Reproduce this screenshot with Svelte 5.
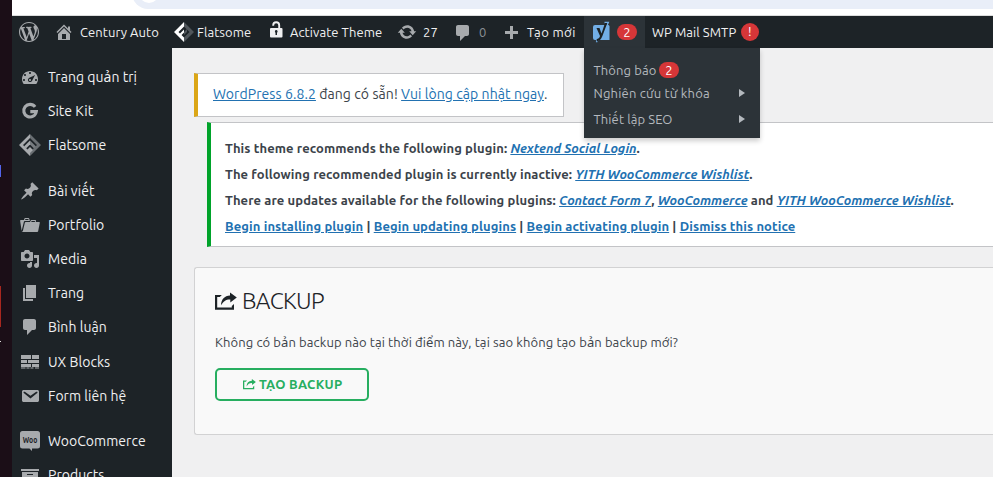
<script>
  const icons = {
    wordpress: 'M20 10c0-5.51-4.49-10-10-10C4.48 0 0 4.49 0 10c0 5.52 4.48 10 10 10 5.51 0 10-4.48 10-10zM7.78 15.37L4.37 6.22c.55-.02 1.17-.08 1.17-.08.5-.06.44-1.13-.06-1.11 0 0-1.45.11-2.37.11-.18 0-.37 0-.58-.01C4.12 2.69 6.87 1.11 10 1.11c2.33 0 4.45.87 6.05 2.34-.68-.11-1.65.39-1.65 1.58 0 .74.45 1.36.9 2.1.35.61.55 1.36.55 2.46 0 1.49-1.4 5-1.4 5l-3.03-8.37c.54-.02.82-.17.82-.17.5-.05.44-1.25-.06-1.22 0 0-1.44.12-2.38.12-.87 0-2.33-.12-2.33-.12-.5-.03-.56 1.2-.06 1.22l.92.08 1.26 3.41zM17.41 10c.24-.64.74-1.87.43-4.25.7 1.29 1.05 2.71 1.05 4.25 0 3.29-1.73 6.24-4.4 7.78.97-2.59 1.94-5.2 2.92-7.78zM6.1 18.09C3.12 16.65 1.11 13.53 1.11 10c0-1.3.23-2.48.72-3.59C3.25 10.3 4.67 14.2 6.1 18.09zm4.03-6.63l2.58 6.98c-.86.29-1.76.45-2.71.45-.79 0-1.57-.11-2.29-.33.81-2.38 1.62-4.74 2.42-7.1z',
    home: 'M16 8.5l1.53 1.53-1.06 1.06L10 4.6l-6.47 6.49-1.06-1.06L10 2.5l4 4v-2h2v4zm-6-2.46l6 5.99V18H4v-5.97zM12 17v-5H8v5h4z',
    update: 'M10.2 3.28c3.53 0 6.43 2.61 6.92 6h2.08l-3.5 4-3.5-4h2.32c-.45-1.97-2.21-3.45-4.32-3.45-1.45 0-2.73.71-3.54 1.78L4.95 5.66C6.23 4.2 8.11 3.28 10.2 3.28zm-.4 13.44c-3.52 0-6.43-2.61-6.92-6H.8l3.5-4c1.17 1.33 2.33 2.67 3.5 4H5.48c.45 1.97 2.21 3.45 4.32 3.45 1.45 0 2.73-.71 3.54-1.78l1.71 1.95c-1.28 1.46-3.15 2.38-5.25 2.38z',
    comment: 'M5 2h9c1.1 0 2 .9 2 2v7c0 1.1-.9 2-2 2h-2l-5 5v-5H5c-1.1 0-2-.9-2-2V4c0-1.1.9-2 2-2z',
    plus: 'M17 7v3h-5v5H9v-5H4V7h5V2h3v5h5z',
    dashboard: 'M3.76 17h12.48c1.1-1.37 1.76-3.11 1.76-5 0-4.42-3.58-8-8-8s-8 3.58-8 8c0 1.89.66 3.63 1.76 5zM9 6c0-.55.45-1 1-1s1 .45 1 1c0 .56-.45 1-1 1s-1-.44-1-1zM4 8c0-.55.45-1 1-1s1 .45 1 1c0 .56-.45 1-1 1s-1-.44-1-1zm4.52 3.4c.84-.83 6.51-3.5 6.51-3.5s-2.66 5.68-3.49 6.51c-.84.84-2.18.84-3.02 0-.83-.83-.83-2.18 0-3.01zM3 13c0-.55.45-1 1-1s1 .45 1 1c0 .56-.45 1-1 1s-1-.44-1-1zm6 0c0 .55.45 1 1 1s1-.45 1-1c0-.56-.45-1-1-1s-1 .44-1 1zm6 0c0-.55.45-1 1-1s1 .45 1 1c0 .56-.45 1-1 1s-1-.44-1-1z',
    pin: 'M10.44 3.02l1.82-1.82 6.36 6.35-1.83 1.82c-1.05-.68-2.48-.57-3.41.36l-.75.75c-.92.93-1.04 2.35-.35 3.41l-1.83 1.82-2.41-2.41-2.8 2.79c-.42.42-3.38 2.71-3.8 2.29s1.86-3.39 2.28-3.81l2.79-2.79L4.1 9.36l1.83-1.82c1.05.69 2.48.57 3.4-.36l.75-.75c.93-.92 1.05-2.35.36-3.41z',
    portfolio: 'M4 5H.78c-.37 0-.74.32-.69.84l1.56 9.99S3.5 8.47 3.86 6.7c.11-.53.61-.7.98-.7H10s-.7-2.08-.77-2.31C9.11 3.25 8.89 3 8.45 3H5.14c-.36 0-.7.23-.8.64C4.25 4.04 4 5 4 5zm4.88 0h-4s.42-1 .87-1h2.13c.48 0 1 1 1 1zM2.67 16.25c-.31.47-.76.75-1.26.75h15.73c.54 0 .92-.31 1.03-.83.44-2.19 1.68-8.44 1.68-8.44.07-.5-.3-.73-.62-.73H16V5.53c0-.16-.26-.53-.66-.53h-3.76c-.52 0-.87.58-.87.58L10 7H5.59c-.32 0-.63.19-.69.5 0 0-1.59 6.7-1.72 7.33-.07.37-.22.99-.51 1.42zM15.38 7H11s.58-1 1.13-1h2.29c.71 0 .96 1 .96 1z',
    media: 'M13 11V4c0-.55-.45-1-1-1h-1.67L9 1H5L3.67 3H2c-.55 0-1 .45-1 1v7c0 .55.45 1 1 1h10c.55 0 1-.45 1-1zM7 4.5c1.38 0 2.5 1.12 2.5 2.5S8.38 9.5 7 9.5 4.5 8.38 4.5 7 5.62 4.5 7 4.5zM14 6h5v10.5c0 1.38-1.12 2.5-2.5 2.5S14 17.88 14 16.5s1.12-2.5 2.5-2.5c.17 0 .34.02.5.05V9h-3V6zm-4 8.05V13h2v3.5c0 1.38-1.12 2.5-2.5 2.5S7 17.88 7 16.5 8.12 14 9.5 14c.17 0 .34.02.5.05z',
    page: 'M6 15V2h10v13H6zm-1 1h8v2H3V5h2v11z',
    blocks: 'M1 3h10v4H1zM12 3h7v4h-7zM1 8h6v3H1zM8 8h11v3H8zM1 12h10v3H1zM12 12h7v3h-7zM1 15.600h4.500v1H1zM6.500 15.600h3v1h-3zM10.500 15.600h3v1h-3zM15 15.600h4v1h-4z',
    email: 'M3.87 4h13.25C18.37 4 19 4.59 19 5.79v8.42c0 1.19-.63 1.79-1.88 1.79H3.87c-1.25 0-1.88-.6-1.88-1.79V5.79c0-1.2.63-1.79 1.88-1.79zm6.62 8.6l6.74-5.53c.24-.2.43-.66.13-1.07-.29-.41-.82-.42-1.17-.17l-5.7 3.86L4.8 5.83c-.35-.25-.88-.24-1.17.17-.3.41-.11.87.13 1.07z',
    archive: 'M19 4v2H1V4h18zM2 7h16v10H2V7zm11 3V9H7v1h6z',
    share: 'M0 4h6.800L4.800 6H2.200v10.600h14.600V15l2.200-2v5.800H0zM15 1.500l6.800 5L15.300 11.500V8.400C11 8.200 8.600 10 6 14.200 6.300 8.300 9.500 5 15 4.600z'
  };

  const groups = [
    [
      { icon: 'dashboard', label: 'Trang quản trị' },
      { icon: 'google', label: 'Site Kit' },
      { icon: 'flatsome', label: 'Flatsome' }
    ],
    [
      { icon: 'pin', label: 'Bài viết' },
      { icon: 'portfolio', label: 'Portfolio' },
      { icon: 'media', label: 'Media' },
      { icon: 'page', label: 'Trang' },
      { icon: 'comment', label: 'Bình luận' },
      { icon: 'blocks', label: 'UX Blocks' },
      { icon: 'email', label: 'Form liên hệ' }
    ],
    [
      { icon: 'woo', label: 'WooCommerce' },
      { icon: 'archive', label: 'Products' }
    ]
  ];
</script>

{#snippet glyph(name)}
  <svg class="glyph" viewBox="0 0 20 20"><path d={icons[name]} fill-rule="evenodd" /></svg>
{/snippet}

<div class="screen">
  <aside class="dock">
    <i class="blue"></i><i class="red"></i><i class="dot"></i>
  </aside>
  <div class="browser">
    <div class="chrome"><div class="address"><i></i></div></div>
    <header class="bar">
      <span class="item logo">{@render glyph('wordpress')}</span>
      <span class="item site">{@render glyph('home')}<span>Century Auto</span></span>
      <span class="item flat">
        <svg width="20" height="20" viewBox="0 0 20 20">
          <path d="M10 0L20 10 10 20V15.500L15.500 10 10 4.500z" fill="#50565b" />
          <path d="M10 10l3-3v3l-3 3z" fill="#50565b" />
          <path d="M10 0v4.500L4.500 10 6 11.500 10 7.500V10.500L7.500 13 10 15.500V20L0 10z" fill="#fff" />
        </svg>
        <span>Flatsome</span>
      </span>
      <span class="item lock">
        <svg width="13" height="17" viewBox="0 0 13 17">
          <path d="M3.200 4.800V4.200a3 3 0 0 1 6 0V8" fill="none" stroke="#f0f0f1" stroke-width="1.900" />
          <rect y="7" width="12.500" height="9.500" rx="1" fill="#f0f0f1" />
          <path d="M6.200 9a1.500 1.500 0 0 1 .8 2.700V14H5.500v-2.300A1.500 1.500 0 0 1 6.200 9z" fill="#1d2327" />
        </svg>
        <span>Activate Theme</span>
      </span>
      <span class="item upd">{@render glyph('update')}<span>27</span></span>
      <span class="item com">{@render glyph('comment')}<span>0</span></span>
      <span class="item new">{@render glyph('plus')}<span>Tạo mới</span></span>
      <div class="yoast">
        <svg width="20" height="22" viewBox="0 0 20 22">
          <path d="M3 4h13.500l1 1v14H3a2 2 0 0 1-2-2V6a2 2 0 0 1 2-2z" fill="#72aee6" />
          <path d="M12.500 1.500h3.700l-2.200 5M8.500 15c-.8 2.600-1.500 4-3.800 4.800v1.400" fill="none" stroke="#72aee6" stroke-width="1.500" />
          <path d="M4.500 7h3l2 5.500L13 2h2.300l-5 13.300c-1.200 3-2.500 4.700-5.600 5V18c2-.3 2.800-1.200 3.300-3z" fill="#1d2327" />
        </svg>
        <span class="badge">2</span>
        <div class="menu">
          <div class="first"><span>Thông báo</span><span class="badge">2</span></div>
          <div class="second"><span>Nghiên cứu từ khóa</span><i></i></div>
          <div><span>Thiết lập SEO</span><i></i></div>
        </div>
      </div>
      <span class="item smtp"><span>WP Mail SMTP</span><span class="badge round">!</span></span>
    </header>

    <div class="body">
      <nav>
        {#each groups as group}
          <ul>
            {#each group as entry}
              <li>
                {#if entry.icon === 'google'}
                  <svg class="glyph" viewBox="0 0 20 20">
                    <path d="M15.100 5.900A6.300 6.300 0 1 0 16.300 10.600H10.300" fill="none" stroke="#a7aaad" stroke-width="3.100" />
                  </svg>
                {:else if entry.icon === 'flatsome'}
                  <svg class="glyph wide" viewBox="0 0 22 22">
                    <path d="M11 0v4L4 11l7 7v4L0 11z" fill="#a7aaad" />
                    <path d="M11 0l11 11-11 11v-4l7-7-7-7z" fill="#696e72" />
                    <path d="M11 6.500v4L7 14.500 5 12.500z" fill="#a7aaad" />
                    <path d="M11 6.500l6 6-2 2-4-4z" fill="#777c80" />
                    <path d="M11 13l3 3-3 3-3-3z" fill="#a7aaad" />
                  </svg>
                {:else if entry.icon === 'woo'}
                  <svg class="glyph" viewBox="0 0 20 20">
                    <path d="M2.500 0h15A2.500 2.500 0 0 1 20 2.500v12.500a2.500 2.500 0 0 1-2.500 2.500h-5.500V20L9.500 17.500H2.500A2.500 2.500 0 0 1 0 15v-12.500A2.500 2.500 0 0 1 2.500 0z" />
                    <text x="2.800" y="12" textLength="14.500" lengthAdjust="spacingAndGlyphs">Woo</text>
                  </svg>
                {:else}
                  {@render glyph(entry.icon)}
                {/if}
                <span>{entry.label}</span>
              </li>
            {/each}
          </ul>
        {/each}
      </nav>

      <main>
        <div class="nag">
          <p><a>WordPress 6.8.2</a> đang có sẵn! <a>Vui lòng cập nhật ngay</a>.</p>
        </div>
        <div class="notice">
          <p>This theme recommends the following plugin: <em><a>Nextend Social Login</a></em>.</p>
          <p>The following recommended plugin is currently inactive: <em><a>YITH WooCommerce Wishlist</a></em>.</p>
          <p>There are updates available for the following plugins: <em><a>Contact Form 7</a></em>, <em><a>WooCommerce</a></em> and <em><a>YITH WooCommerce Wishlist</a></em>.</p>
          <p><a>Begin installing plugin</a> | <a>Begin updating plugins</a> | <a>Begin activating plugin</a> | <a>Dismiss this notice</a></p>
        </div>
        <section>
          <h1>
            <svg width="22" height="20" viewBox="0 0 22 20"><path d={icons.share} fill="#1d2327" /></svg>
            <span>BACKUP</span>
          </h1>
          <p>Không có bản backup nào tại thời điểm này, tại sao không tạo bản backup mới?</p>
          <button>
            <svg width="13" height="12" viewBox="0 0 22 20"><path d={icons.share} fill="#27ae60" /></svg>
            <span>TẠO BACKUP</span>
          </button>
        </section>
      </main>
    </div>
  </div>
</div>

<style>
  .screen {
    display: flex;
    width: 993px;
    height: 477px;
    overflow: hidden;
    background: #f0f0f1;
    font-family: Ubuntu, 'Noto Sans', 'Open Sans', sans-serif;
    font-size: 13px;
    color: #3c434a;
    white-space: nowrap;
  }
  svg { display: block; flex: none; }
  .glyph { width: 20px; height: 20px; fill: #a7aaad; }
  .glyph text { font-size: 8.500px; font-weight: 700; fill: #1d2327; letter-spacing: 0; }
  .glyph.wide { width: 22px; height: 22px; margin: 0 -1px; }

  .dock { width: 12px; flex: none; background: #1b0e17; display: flex; flex-direction: column; }
  .dock i { width: 1px; flex: none; }
  .blue { height: 12px; margin-top: 165px; background: #5364ec; }
  .red { height: 41px; margin-top: 109px; background: #a7271f; }
  .dot { height: 1px; margin-top: 14px; background: #ddd; }

  .browser { width: 981px; display: flex; flex-direction: column; }
  .chrome { height: 15px; flex: none; background: #fff; border-bottom: 1px solid #dcdddd; display: flex; overflow: hidden; }
  .address { margin: -23px -20px 0 120px; flex: 1; height: 32px; border-radius: 16px; background: #e9eef8; padding-left: 7px; }
  .address i { display: block; width: 20px; height: 20px; margin-top: 6px; border-radius: 50%; background: #fff; }

  .bar { height: 32px; flex: none; display: flex; align-items: center; background: #1d2327; color: #f0f0f1; line-height: 32px; letter-spacing: .07px; }
  .item { display: flex; align-items: center; flex: none; box-sizing: border-box; }
  .logo { width: 42px; padding-left: 7px; }
  .site { width: 120px; gap: 6px; }
  .flat { width: 95px; gap: 3px; }
  .lock { width: 128px; padding-left: 1px; gap: 7px; }
  .lock svg { margin-top: -5px; }
  .upd { width: 56px; gap: 6px; }
  .com { width: 48px; gap: 6px; color: #8c9095; }
  .com svg { margin-top: 2px; }
  .new { width: 83px; gap: 6px; letter-spacing: .38px; }
  .new svg { margin-top: 3px; }
  .yoast { position: relative; width: 61px; height: 32px; box-sizing: border-box; flex: none; padding-left: 8px; display: flex; align-items: center; gap: 5px; background: #2c3338; }
  .badge { width: 20px; height: 16px; flex: none; border-radius: 9px; background: #d63638; color: #fff; text-align: center; line-height: 16px; letter-spacing: 0; }
  .badge.round { width: 18px; height: 18px; line-height: 17px; }
  .smtp { margin-left: 7px; gap: 4.5px; }
  .menu { position: absolute; z-index: 5; left: 0; top: 32px; width: 176px; height: 90px; box-sizing: border-box; padding: 11px 15px 0 9.5px; background: #2c3338; color: #b4b9be; box-shadow: 0 3px 5px rgba(0, 0, 0, .2); letter-spacing: .1px; }
  .menu div { display: flex; align-items: center; height: 26px; line-height: 26px; }
  .menu .first { height: 22px; gap: 2.5px; }
  .menu .second { height: 24px; padding-bottom: 1px; letter-spacing: .18px; }
  .menu i { margin-left: auto; border: 4px solid transparent; border-left: 6px solid #b4b9be; border-right: 0; }

  .body { display: flex; flex: 1; min-height: 0; }
  nav { width: 160px; flex: none; padding-top: 12px; box-sizing: border-box; background: #1d2327; color: #f0f0f1; font-size: 14px; letter-spacing: .04px; }
  ul { list-style: none; margin: 0 0 11.200px; padding: 0; }
  li { display: flex; align-items: center; gap: 8px; height: 34.170px; padding-left: 8px; line-height: 18px; }

  main { flex: 1; min-width: 0; padding: 25px 0 0 22px; }
  a { color: #2271b1; text-decoration: underline; }
  .nag { width: 370px; height: 44px; box-sizing: border-box; padding: 10px 0 0 15px; background: #fff; border: 1px solid #c3c4c7; border-left: 4px solid #dba617; font-size: 14px; line-height: 20px; letter-spacing: .08px; }
  .nag p { margin: 0; }
  .notice { margin: 5px 0 0 13px; height: 125px; box-sizing: border-box; padding: 12px 0 0 14px; background: #fff; border: 1px solid #c3c4c7; border-left: 4px solid #00a32a; border-right: 0; font-weight: 700; letter-spacing: .1px; }
  .notice p { margin: 0; height: 26px; line-height: 26px; }
  .notice em { letter-spacing: 0; }

  section { margin-top: 20px; height: 168px; box-sizing: border-box; padding: 18px 20px 0; background: #f9f9f9; border: 1px solid #d2d2d3; border-right: 0; border-radius: 3px 0 0 3px; }
  h1 { display: flex; align-items: center; gap: 5px; margin: 0; height: 30px; font-size: 23px; font-weight: 300; line-height: 30px; letter-spacing: -.65px; color: #1d2327; }
  section p { margin: 16px 0 0; height: 20px; line-height: 20px; letter-spacing: .105px; }
  button { display: flex; align-items: center; gap: 3px; width: 154px; height: 33px; margin-top: 16px; padding: 0 0 2px 26px; box-sizing: border-box; border: 2px solid #27ae60; border-radius: 5px; background: transparent; color: #27ae60; font: inherit; font-weight: 700; letter-spacing: .28px; }
</style>
